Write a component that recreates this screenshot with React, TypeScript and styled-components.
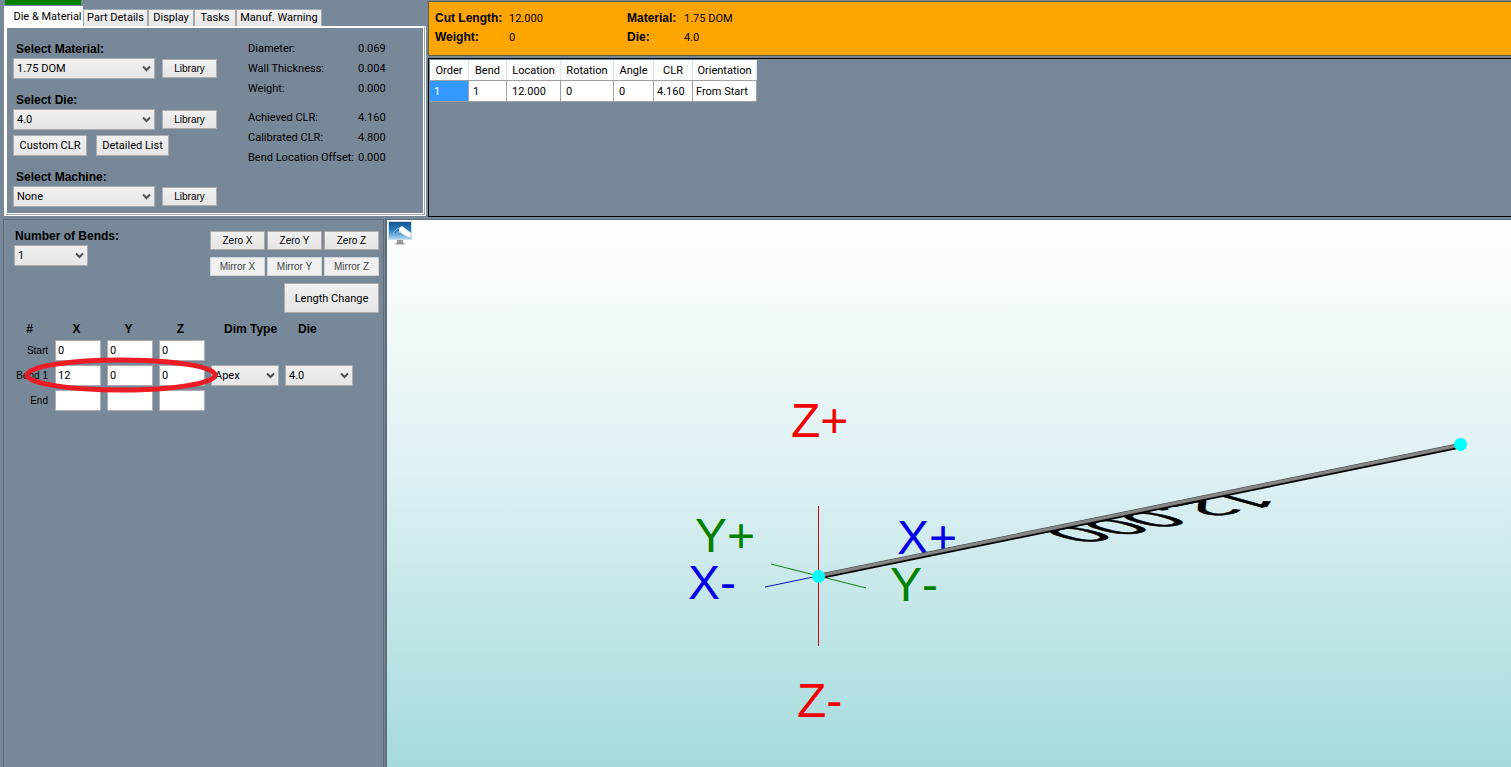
import React from "react";
import styled, { createGlobalStyle, css } from "styled-components";

const Global = createGlobalStyle`
  * { box-sizing: border-box; }
  html, body { margin: 0; height: 100%; background: #778899; }
  body, button, input, select {
    font-family: Roboto, "Liberation Sans", Arial, sans-serif;
    font-size: 11px;
    color: #000;
  }
  #root { height: 100%; }
`;

const wide = css`
  font-family: "Liberation Sans", Arial, sans-serif;
`;

const Page = styled.div`
  display: flex;
  flex-direction: column;
  min-height: 100vh;
  background: #778899;
`;

const TopRow = styled.div`
  display: flex;
  height: 217px;
`;

const BottomRow = styled.div`
  display: flex;
  flex: 1;
  padding: 2px 0 0 3px;
`;

const TabSection = styled.section`
  display: flex;
  flex-direction: column;
  width: 428px;
  flex: none;
  padding: 0 2px 1px 4px;
`;

const Progress = styled.div`
  width: 76px;
  height: 5px;
  margin-left: 1px;
  background: #008000;
  flex: none;
`;

const TabBar = styled.div`
  display: flex;
  align-items: flex-end;
  height: 21px;
  flex: none;
`;

const Tab = styled.button<{ $active?: boolean; $width: number }>`
  width: ${(p) => p.$width}px;
  height: ${(p) => (p.$active ? 20 : 17)}px;
  padding: ${(p) => (p.$active ? "0 0 0 8px" : "0")};
  border: 1px solid #a6a6a6;
  border-bottom: 0;
  background: ${(p) => (p.$active ? "#fff" : "linear-gradient(#f2f2f2, #e6e6e6)")};
  line-height: 16px;
  white-space: nowrap;
  ${(p) => p.$active && "border-color: #fff;"}
`;

const Pane = styled.div`
  flex: 1;
  display: flex;
  border: 1px solid #fff;
  border-width: 1px 1px 1px 2px;
  padding: 0 1px 1px 0;
  background: #a0a0a8;
`;

const PaneBody = styled.div`
  flex: 1;
  display: flex;
  border: 1px solid #fff;
  padding: 12px 0 0 6px;
  background: #778899;
`;

const Pickers = styled.div`
  display: flex;
  flex-direction: column;
  gap: 12px;
  width: 235px;
`;

const Label = styled.label<{ $indent: number }>`
  ${wide}
  display: block;
  padding-left: ${(p) => p.$indent}px;
  font-size: 12px;
  font-weight: bold;
  line-height: 18px;
`;

const Row = styled.div<{ $gap: number; $top?: number }>`
  display: flex;
  align-items: center;
  gap: ${(p) => p.$gap}px;
  margin-top: ${(p) => p.$top ?? 0}px;
`;

const SelectBox = styled.span<{ $width: number }>`
  position: relative;
  display: block;
  width: ${(p) => p.$width}px;
  height: 21px;

  select {
    display: block;
    width: 100%;
    height: 100%;
    padding: 0 3px;
    appearance: none;
    border: 1px solid #acacac;
    border-radius: 0;
    background: linear-gradient(#f0f0f0, #e5e5e5);
  }
  svg {
    position: absolute;
    right: 4px;
    top: 7px;
    pointer-events: none;
  }
`;

const Button = styled.button<{ $width: number; $height?: number; $small?: boolean; $dim?: boolean }>`
  width: ${(p) => p.$width}px;
  height: ${(p) => p.$height ?? 21}px;
  padding: 0;
  border: 1px solid #acacac;
  background: linear-gradient(#f0f0f0, #e5e5e5);
  white-space: nowrap;
  ${(p) => p.$small && css`
    ${wide}
    font-size: 10px;
  `}
  ${(p) => p.$dim && "color: #444; border-color: #d0d4d8; background: #f0f0f0;"}
`;

const Facts = styled.dl`
  display: grid;
  grid-template-columns: 110px auto;
  align-content: start;
  margin: -1px 0 0;
  line-height: 20px;
  dt, dd { margin: 0; white-space: nowrap; }
`;

const Spacer = styled.div`
  grid-column: 1 / -1;
  height: 9px;
`;

const ResultSection = styled.section`
  flex: 1;
  display: flex;
  flex-direction: column;
  gap: 2px;
  padding-top: 1px;
`;

const Summary = styled.dl`
  display: grid;
  grid-template-columns: 74px 118px 57px 1fr;
  align-content: start;
  height: 55px;
  margin: 0;
  padding: 7px 0 0 6px;
  border: 1px solid #5c5e48;
  border-right: 0;
  background: #ffa500;
  line-height: 19px;
  dt { ${wide} font-size: 12px; font-weight: bold; }
  dd { margin: 0; }
`;

const GridPanel = styled.div`
  flex: 1;
  padding: 1px;
  border: 1px solid #000;
  border-right: 0;
`;

const BendTable = styled.table`
  table-layout: fixed;
  width: 327px;
  border-spacing: 0;
  th {
    height: 20px;
    padding: 0;
    border-right: 1px solid #dfe6ee;
    background: #fcfcfd;
    font-weight: normal;
  }
  td {
    height: 22px;
    padding: 0 0 0 4px;
    border: 0 solid #a0a0a0;
    border-width: 1px 1px 1px 0;
    background: #fff;
    white-space: nowrap;
  }
  td:nth-child(n + 3) { padding-left: 5px; }
  td:nth-child(n + 6) { padding-left: 3px; }
  td:first-child { background: #3399ff; color: #fff; }
`;

const InputPanel = styled.section`
  flex: none;
  width: 381px;
  border: 1px solid #5f6c7a;
  border-bottom: 0;
`;

const InputTop = styled.div`
  display: flex;
  justify-content: space-between;
  height: 100px;
  padding: 7px 4px 0 10px;
`;

const Tools = styled.div`
  display: flex;
  flex-direction: column;
  align-items: flex-end;
  gap: 7px;
  padding-top: 4px;
`;

const PointsWrap = styled.div`
  position: relative;
`;

const Points = styled.table`
  table-layout: fixed;
  width: 354px;
  border-collapse: collapse;
  th, td { padding: 0; height: 25px; text-align: left; }
  thead th { ${wide} height: 18px; font-size: 12px; }
  tbody th {
    ${wide}
    padding-right: 7px;
    font-size: 10px;
    font-weight: normal;
    text-align: right;
  }
`;

const Head = styled.th<{ $kind: "number" | "axis" | "choice" }>`
  && {
    text-align: ${(p) => (p.$kind === "choice" ? "left" : "center")};
    padding-left: ${(p) => (p.$kind === "choice" ? 13 : 0)}px;
    padding-right: ${(p) => (p.$kind === "axis" ? 9 : 0)}px;
  }
`;

const Coord = styled.input`
  display: block;
  width: 46px;
  height: 21px;
  padding: 0 2px;
  border: 1px solid #abadb3;
  background: #fff;
`;

const Marker = styled.svg`
  position: absolute;
  left: 20px;
  top: 36px;
  pointer-events: none;
`;

const Viewer = styled.section`
  position: relative;
  flex: 1;
  min-width: 0;
  margin-left: 1px;
  border-left: 2px solid #5f6c7a;
  border-top: 1px solid #5f6c7a;
  background: linear-gradient(#ffffff 0%, #dff1f3 45%, #a5dadd 100%);
`;

const Scene = styled.svg`
  display: block;
  width: 100%;
  height: 100%;
  font-family: "Liberation Sans", Arial, sans-serif;
  font-size: 48px;
  font-kerning: none;
`;

const ViewButton = styled.button`
  position: absolute;
  left: 0;
  top: 0;
  padding: 0;
  border: 0;
  background: none;
  svg { display: block; }
`;

function Choice({ id, value, width, label }: { id: string; value: string; width: number; label?: string }) {
  return (
    <SelectBox $width={width}>
      <select id={id} aria-label={label} defaultValue={value}>
        <option>{value}</option>
      </select>
      <svg width="9" height="8" viewBox="0 0 9 8">
        <path d="M1 1.5 L4.5 5 L8 1.5" fill="none" stroke="#505050" strokeWidth="2" />
      </svg>
    </SelectBox>
  );
}

const bendColumns: [string, string, number][] = [
  ["Order", "1", 39],
  ["Bend", "1", 38],
  ["Location", "12.000", 54],
  ["Rotation", "0", 53],
  ["Angle", "0", 40],
  ["CLR", "4.160", 39],
  ["Orientation", "From Start", 64],
];

const points = [
  { name: "Start", xyz: ["0", "0", "0"] },
  { name: "Bend 1", xyz: ["12", "0", "0"], dim: "Apex", die: "4.0" },
  { name: "End", xyz: ["", "", ""] },
];

const axes = ["X", "Y", "Z"];

export default function App() {
  return (
    <Page>
      <Global />
      <TopRow>
        <TabSection>
          <Progress />
          <TabBar role="tablist">
            <Tab role="tab" aria-selected $active $width={79}>Die &amp; Material</Tab>
            <Tab role="tab" $width={65}>Part Details</Tab>
            <Tab role="tab" $width={46}>Display</Tab>
            <Tab role="tab" $width={42}>Tasks</Tab>
            <Tab role="tab" $width={86}>Manuf. Warning</Tab>
          </TabBar>
          <Pane>
            <PaneBody>
              <Pickers>
                <div>
                  <Label $indent={3} htmlFor="material">Select Material:</Label>
                  <Row $gap={7}>
                    <Choice id="material" value="1.75 DOM" width={142} />
                    <Button $width={55} $height={19} $small>Library</Button>
                  </Row>
                </div>
                <div>
                  <Label $indent={3} htmlFor="die">Select Die:</Label>
                  <Row $gap={7}>
                    <Choice id="die" value="4.0" width={142} />
                    <Button $width={55} $height={19} $small>Library</Button>
                  </Row>
                  <Row $gap={9} $top={5}>
                    <Button $width={74}>Custom CLR</Button>
                    <Button $width={73}>Detailed List</Button>
                  </Row>
                </div>
                <div>
                  <Label $indent={3} htmlFor="machine">Select Machine:</Label>
                  <Row $gap={7}>
                    <Choice id="machine" value="None" width={142} />
                    <Button $width={55} $height={19} $small>Library</Button>
                  </Row>
                </div>
              </Pickers>
              <Facts>
                <dt>Diameter:</dt><dd>0.069</dd>
                <dt>Wall Thickness:</dt><dd>0.004</dd>
                <dt>Weight:</dt><dd>0.000</dd>
                <Spacer />
                <dt>Achieved CLR:</dt><dd>4.160</dd>
                <dt>Calibrated CLR:</dt><dd>4.800</dd>
                <dt>Bend Location Offset:</dt><dd>0.000</dd>
              </Facts>
            </PaneBody>
          </Pane>
        </TabSection>
        <ResultSection>
          <Summary>
            <dt>Cut Length:</dt><dd>12.000</dd>
            <dt>Material:</dt><dd>1.75 DOM</dd>
            <dt>Weight:</dt><dd>0</dd>
            <dt>Die:</dt><dd>4.0</dd>
          </Summary>
          <GridPanel>
            <BendTable>
              <colgroup>
                {bendColumns.map(([name, , width]) => <col key={name} width={width} />)}
              </colgroup>
              <thead>
                <tr>{bendColumns.map(([name]) => <th key={name}>{name}</th>)}</tr>
              </thead>
              <tbody>
                <tr>{bendColumns.map(([name, value]) => <td key={name}>{value}</td>)}</tr>
              </tbody>
            </BendTable>
          </GridPanel>
        </ResultSection>
      </TopRow>
      <BottomRow>
        <InputPanel>
          <InputTop>
            <div>
              <Label $indent={1} htmlFor="bends">Number of Bends:</Label>
              <Choice id="bends" value="1" width={74} />
            </div>
            <Tools>
              <Row $gap={2}>
                {axes.map((a) => <Button key={a} $width={55} $height={19} $small>Zero {a}</Button>)}
              </Row>
              <Row $gap={2}>
                {axes.map((a) => <Button key={a} $width={55} $height={19} $small $dim>Mirror {a}</Button>)}
              </Row>
              <Button $width={95} $height={30}>Length Change</Button>
            </Tools>
          </InputTop>
          <PointsWrap>
            <Points>
              <colgroup>
                <col width={51} /><col width={52} /><col width={52} /><col width={52} />
                <col width={74} /><col width={73} />
              </colgroup>
              <thead>
                <tr>
                  <Head $kind="number">#</Head>
                  {axes.map((a) => <Head key={a} $kind="axis">{a}</Head>)}
                  <Head $kind="choice">Dim Type</Head>
                  <Head $kind="choice">Die</Head>
                </tr>
              </thead>
              <tbody>
                {points.map((p) => (
                  <tr key={p.name}>
                    <th scope="row">{p.name}</th>
                    {p.xyz.map((v, i) => (
                      <td key={axes[i]}>
                        <Coord aria-label={`${p.name} ${axes[i]}`} defaultValue={v} />
                      </td>
                    ))}
                    <td>{p.dim && <Choice id="dim" label="Dim Type" value={p.dim} width={68} />}</td>
                    <td>{p.die && <Choice id="bend-die" label="Bend die" value={p.die} width={68} />}</td>
                  </tr>
                ))}
              </tbody>
            </Points>
            <Marker width="196" height="38" viewBox="0 0 196 38">
              <ellipse cx="97" cy="19" rx="94" ry="15" fill="none" stroke="#ed1c24" strokeWidth="5" />
            </Marker>
          </PointsWrap>
        </InputPanel>
        <Viewer>
          <Scene viewBox="387 220 1124 547" preserveAspectRatio="xMidYMid meet">
            <text x="791" y="437" fill="#f00000">Z+</text>
            <text x="695" y="552" fill="#008000">Y+</text>
            <text x="688" y="599" fill="#0000e8">X-</text>
            <text x="897" y="554" fill="#0000e8">X+</text>
            <text x="890" y="601" fill="#008000">Y-</text>
            <text x="797" y="717" fill="#f00000">Z-</text>
            <g fill="none" strokeWidth="1">
              <path d="M818.5 506 V646" stroke="#c01010" />
              <path d="M771 564 L866 588" stroke="#108010" />
              <path d="M765 587 L818 576" stroke="#1010b0" />
            </g>
            <text
              transform="matrix(-1.3 0.265 -1.2 -0.33 1242 491)"
              fontFamily="'Open Sans', sans-serif"
              fontSize="50"
              stroke="#000"
              strokeWidth="1"
            >
              12.000
            </text>
            <path d="M818 578 L1460 447" stroke="#000" strokeWidth="3" />
            <path d="M818 576 L1460 445" stroke="#3c3c3c" strokeWidth="4" />
            <path d="M818 576 L1460 445" stroke="#868686" strokeWidth="3" />
            <circle cx="818.5" cy="576.5" r="6.5" fill="#00ffff" />
            <circle cx="1460.5" cy="444.5" r="6.5" fill="#00ffff" />
          </Scene>
          <ViewButton aria-label="View settings">
            <svg width="26" height="26" viewBox="0 0 26 26">
              <defs>
                <linearGradient id="screen" x1="0" y1="0" x2="0" y2="1">
                  <stop offset="0" stopColor="#14508c" />
                  <stop offset="0.5" stopColor="#2f7fc0" />
                  <stop offset="1" stopColor="#b4dcf4" />
                </linearGradient>
              </defs>
              <rect x="1.5" y="1.5" width="23" height="18" fill="url(#screen)" stroke="#c8dcec" />
              <path d="M10 20 H16 V22 L18 24.5 H8 L10 22 Z" fill="#999" />
              <path d="M12 8 L15 6 L24 13 V17 H21 L12 12 Z" fill="#fff" />
              <path d="M7 15 Q5 12 9 10 Q10 7 13 9 M9 14 Q10 11 14 12" fill="none" stroke="#8fbce0" strokeWidth="1" />
            </svg>
          </ViewButton>
        </Viewer>
      </BottomRow>
    </Page>
  );
}
